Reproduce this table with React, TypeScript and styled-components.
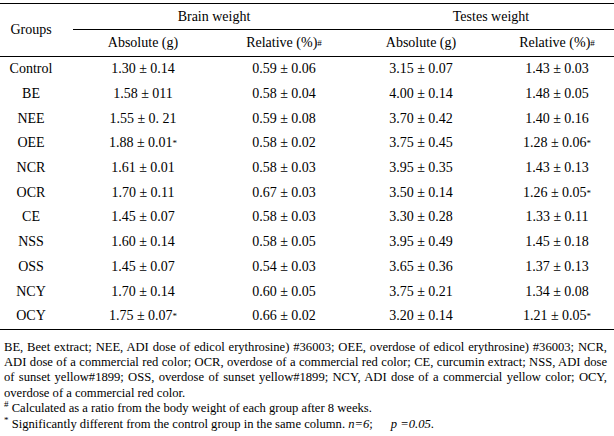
import styled, { createGlobalStyle } from "styled-components"

const GlobalStyle = createGlobalStyle`
  html, body {
    margin: 0;
    background: #ffffff;
    overflow: hidden;
  }
  body {
    font-family: "Liberation Serif", "Times New Roman", serif;
    color: #000;
  }
`

const Page = styled.div`
  width: 614px;
  height: 436px;
  overflow: hidden;
  padding-top: 3px;
  box-sizing: border-box;
`

const Table = styled.div`
  width: 627px;
  border-top: 1px solid #000;
  border-bottom: 1px solid #000;
`

const COLUMNS = "73px 140px 142px 132px 140px"

const Head = styled.div`
  display: grid;
  grid-template-columns: ${COLUMNS};
  grid-template-rows: 26px 26px;
  border-bottom: 1px solid #000;
  font-size: 14px;
`

const HeadCell = styled.div<{ $span?: number; $rows?: number; $rule?: boolean }>`
  grid-column: span ${(p) => p.$span ?? 1};
  grid-row: span ${(p) => p.$rows ?? 1};
  display: flex;
  align-items: center;
  justify-content: center;
  box-sizing: border-box;
  border-bottom: ${(p) => (p.$rule ? "1px solid #000" : "none")};
`

const GroupHead = styled(HeadCell)`
  padding-right: 11px;
`

const Row = styled.div`
  display: grid;
  grid-template-columns: ${COLUMNS};
  height: 24.7px;
  font-size: 14px;
`

const Cell = styled.div`
  display: flex;
  align-items: center;
  justify-content: center;
  white-space: nowrap;
`

const GroupCell = styled(Cell)`
  padding-right: 11px;
`

const Sup = styled.sup`
  font-size: 9px;
  line-height: 0;
  vertical-align: 5px;
`

const Notes = styled.div`
  margin-top: 10px;
  padding: 0 7px 0 4px;
  font-size: 12.6px;
  line-height: 15.4px;
`

const NoteLine = styled.div<{ $justify?: boolean }>`
  white-space: nowrap;
  text-align: ${(p) => (p.$justify ? "justify" : "left")};
  text-align-last: ${(p) => (p.$justify ? "justify" : "left")};
`

const Em = styled.i`
  font-style: italic;
`

const Tab = styled.span`
  display: inline-block;
  width: 18px;
`

type Val = { v: string; s?: boolean }

const rows: { g: string; c: Val[] }[] = [
  { g: "Control", c: [{ v: "1.30 ± 0.14" }, { v: "0.59 ± 0.06" }, { v: "3.15 ± 0.07" }, { v: "1.43 ± 0.03" }] },
  { g: "BE", c: [{ v: "1.58 ± 011" }, { v: "0.58 ± 0.04" }, { v: "4.00 ± 0.14" }, { v: "1.48 ± 0.05" }] },
  { g: "NEE", c: [{ v: "1.55 ± 0. 21" }, { v: "0.59 ± 0.08" }, { v: "3.70 ± 0.42" }, { v: "1.40 ± 0.16" }] },
  { g: "OEE", c: [{ v: "1.88 ± 0.01", s: true }, { v: "0.58 ± 0.02" }, { v: "3.75 ± 0.45" }, { v: "1.28 ± 0.06", s: true }] },
  { g: "NCR", c: [{ v: "1.61 ± 0.01" }, { v: "0.58 ± 0.03" }, { v: "3.95 ± 0.35" }, { v: "1.43 ± 0.13" }] },
  { g: "OCR", c: [{ v: "1.70 ± 0.11" }, { v: "0.67 ± 0.03" }, { v: "3.50 ± 0.14" }, { v: "1.26 ± 0.05", s: true }] },
  { g: "CE", c: [{ v: "1.45 ± 0.07" }, { v: "0.58 ± 0.03" }, { v: "3.30 ± 0.28" }, { v: "1.33 ± 0.11" }] },
  { g: "NSS", c: [{ v: "1.60 ± 0.14" }, { v: "0.58 ± 0.05" }, { v: "3.95 ± 0.49" }, { v: "1.45 ± 0.18" }] },
  { g: "OSS", c: [{ v: "1.45 ± 0.07" }, { v: "0.54 ± 0.03" }, { v: "3.65 ± 0.36" }, { v: "1.37 ± 0.13" }] },
  { g: "NCY", c: [{ v: "1.70 ± 0.14" }, { v: "0.60 ± 0.05" }, { v: "3.75 ± 0.21" }, { v: "1.34 ± 0.08" }] },
  { g: "OCY", c: [{ v: "1.75 ± 0.07", s: true }, { v: "0.66 ± 0.02" }, { v: "3.20 ± 0.14" }, { v: "1.21 ± 0.05", s: true }] },
]

export default function App() {
  return (
    <Page>
      <GlobalStyle />
      <Table>
        <Head>
          <GroupHead $rows={2}>Groups</GroupHead>
          <HeadCell $span={2} $rule>Brain weight</HeadCell>
          <HeadCell $span={2} $rule>Testes weight</HeadCell>
          <HeadCell>Absolute (g)</HeadCell>
          <HeadCell>
            Relative (%)<Sup>#</Sup>
          </HeadCell>
          <HeadCell>Absolute (g)</HeadCell>
          <HeadCell>
            Relative (%)<Sup>#</Sup>
          </HeadCell>
        </Head>
        {rows.map((r) => (
          <Row key={r.g}>
            <GroupCell>{r.g}</GroupCell>
            {r.c.map((c, i) => (
              <Cell key={i}>
                {c.v}
                {c.s && <Sup>*</Sup>}
              </Cell>
            ))}
          </Row>
        ))}
      </Table>
      <Notes>
        <NoteLine $justify>
          BE, Beet extract; NEE, ADI dose of edicol erythrosine) #36003; OEE, overdose of edicol erythrosine) #36003; NCR,
        </NoteLine>
        <NoteLine $justify>
          ADI dose of a commercial red color; OCR, overdose of a commercial red color; CE, curcumin extract; NSS, ADI dose
        </NoteLine>
        <NoteLine $justify>
          of sunset yellow#1899; OSS, overdose of sunset yellow#1899; NCY, ADI dose of a commercial yellow color; OCY,
        </NoteLine>
        <NoteLine>overdose of a commercial red color.</NoteLine>
        <NoteLine>
          <Sup>#</Sup> Calculated as a ratio from the body weight of each group after 8 weeks.
        </NoteLine>
        <NoteLine>
          <Sup>*</Sup> Significantly different from the control group in the same column. <Em>n=6</Em>;<Tab />
          <Em>p =0.05</Em>.
        </NoteLine>
      </Notes>
    </Page>
  )
}
